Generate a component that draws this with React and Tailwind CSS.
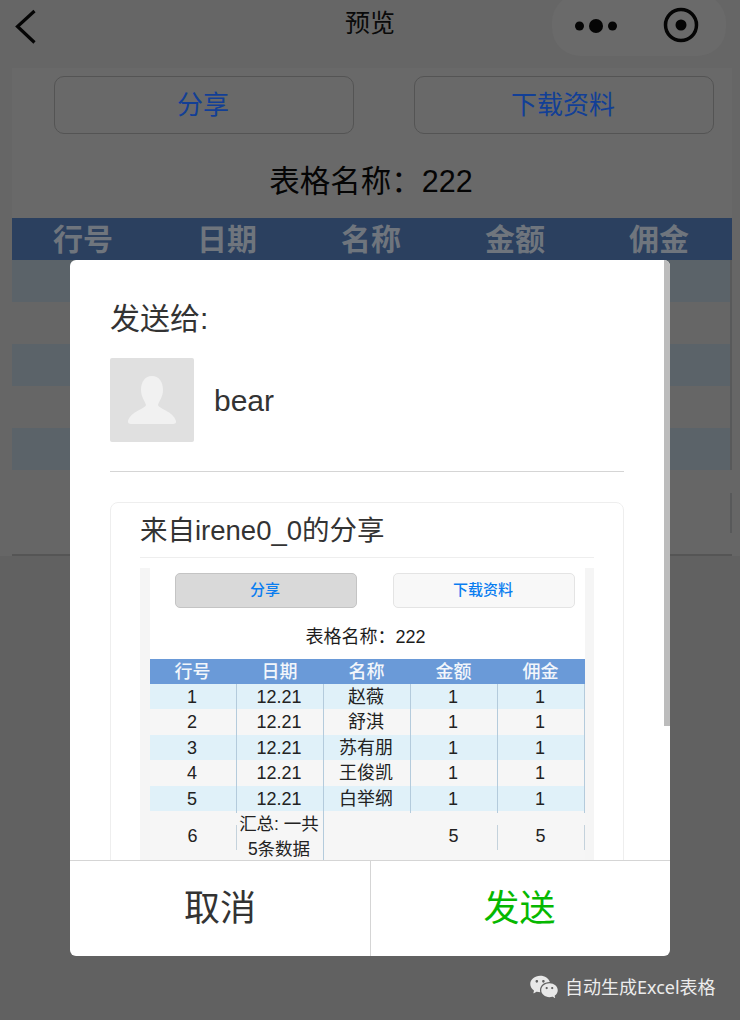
// App.jsx
// Share preview page with the "send to" dialog open
import React from 'react';
import { RiWechatFill } from 'react-icons/ri';

const COLUMNS = ['行号', '日期', '名称', '金额', '佣金'];

const ROWS = [
  ['1', '12.21', '赵薇', '1', '1'],
  ['2', '12.21', '舒淇', '1', '1'],
  ['3', '12.21', '苏有朋', '1', '1'],
  ['4', '12.21', '王俊凯', '1', '1'],
  ['5', '12.21', '白举纲', '1', '1'],
];

const PageBehind = () => (
  <div className="flex flex-col bg-[#666666] h-[556px]">
    {/* nav bar */}
    <div className="relative h-[68px] shrink-0 flex items-start justify-center">
      <svg className="absolute left-[14px] top-[8px]" width="24" height="38" viewBox="0 0 24 38" fill="none">
        <path d="M20.5 3 L3.5 18.5 L20.5 34.5" stroke="#050505" strokeWidth="3.2" />
      </svg>
      <span className="mt-[8px] text-[25px] leading-[30px] text-[#0a0a0a]">预览</span>
      <div className="absolute left-[552px] top-[-6px] w-[174px] h-[62px] rounded-[28px] bg-[#6a6a6a] flex items-center">
        <svg className="ml-[20px] mt-[2px]" width="50" height="16" viewBox="0 0 50 16">
          <circle cx="7.5" cy="8" r="4.5" fill="#050505" />
          <circle cx="24" cy="8" r="7" fill="#050505" />
          <circle cx="40.5" cy="8" r="4.5" fill="#050505" />
        </svg>
        <svg className="ml-[41px]" width="36" height="36" viewBox="0 0 36 36" fill="none">
          <circle cx="18" cy="18" r="15.5" stroke="#050505" strokeWidth="3.5" />
          <circle cx="18" cy="18" r="5.5" fill="#050505" />
        </svg>
      </div>
    </div>

    {/* page body */}
    <div className="ml-3 w-[720px] bg-[#696969] flex flex-col">
      <div className="flex pt-2 pl-[42px] gap-[60px]">
        <div className="w-[300px] h-[58px] rounded-[10px] border border-[#545454] flex items-center justify-center pr-[2px] text-[26px] text-[#123f96]">分享</div>
        <div className="w-[300px] h-[58px] rounded-[10px] border border-[#545454] flex items-center justify-center pr-[2px] text-[26px] text-[#123f96]">下载资料</div>
      </div>
      <div className="mt-[27px] h-[40px] text-center pr-[2px] text-[30.5px] leading-[40px] text-[#050505]">表格名称：222</div>
      <div className="mt-[17px] h-[42px] grid grid-cols-5 bg-[#2b405f] text-[30px] leading-[43px] text-center font-bold text-[#6f757d]">
        {COLUMNS.map(c => <div key={c} className="pr-[2px]">{c}</div>)}
      </div>
      <div className="h-[42px] bg-[#5b6369] border-r-2 border-[#58595a]" />
      <div className="h-[42px] bg-[#666666] border-r-2 border-[#58595a]" />
      <div className="h-[42px] bg-[#5b6369] border-r-2 border-[#58595a]" />
      <div className="h-[42px] bg-[#666666] border-r-2 border-[#58595a]" />
      <div className="h-[42px] bg-[#5b6369] border-r-2 border-[#58595a]" />
      <div className="h-[86px] bg-[#666666] border-b-2 border-[#555555] flex justify-end pt-[23px]">
        <div className="w-[2px] h-[40px] bg-[#58595a]" />
      </div>
    </div>
  </div>
);

// short divider in the total row, it does not reach the row's full height
const TotalCell = ({ children }) => (
  <div className="relative flex items-center justify-center pr-[2px]">
    {children}
    <div className="absolute right-0 top-[14px] h-[25px] w-px bg-[#c4d2dc]" />
  </div>
);

const SharedPreview = () => (
  <div className="mt-[10px] mx-[29px] pl-[10px] pr-[9px] bg-[#f5f5f5]">
    <div className="bg-white">
      <div className="flex pt-[5px] pl-[25px] gap-[36px]">
        <div className="w-[182px] h-[35px] rounded-[5px] border border-[#c4c4c4] bg-[#d9d9d9] flex items-center justify-center pr-[2px] text-[15px] font-medium text-[#0a7df0]">分享</div>
        <div className="w-[182px] h-[35px] rounded-[5px] border border-[#e4e4e4] bg-[#f8f8f8] flex items-center justify-center pr-[2px] text-[15px] font-medium text-[#0a7df0]">下载资料</div>
      </div>
      <div className="mt-[15px] h-[28px] text-center pr-[4px] text-[18px] leading-[28px] text-[#1c1c1c]">表格名称：222</div>
      <div className="mt-[8px] h-[25px] grid grid-cols-5 bg-[#6a9ad8] text-[18px] leading-[26px] text-center font-medium text-[#f2f6fb]">
        {COLUMNS.map(c => <div key={c} className="pr-[2px]">{c}</div>)}
      </div>
      {ROWS.map((row, i) => (
        <div key={row[0]} className={`h-[25.4px] grid grid-cols-5 text-[18px] leading-[27px] text-center text-[#222] ${i % 2 === 0 ? 'bg-[#e0f1f9]' : 'bg-[#f6f6f6]'}`}>
          {row.map((cell, j) => (
            <div key={j} className="border-r border-[#b4cbdc] pr-[2px]">{cell}</div>
          ))}
        </div>
      ))}
      <div className="h-[49px] grid grid-cols-5 bg-[#f6f6f6] text-[18px] text-center text-[#222] overflow-hidden">
        <TotalCell>6</TotalCell>
        <div className="leading-[25px] border-r border-[#b4cbdc] text-[17.5px] pt-[1px] pr-[2px] whitespace-nowrap">汇总: 一共<br />5条数据</div>
        <div />
        <TotalCell>5</TotalCell>
        <TotalCell>5</TotalCell>
      </div>
    </div>
  </div>
);

const SendDialog = () => (
  <div className="absolute left-[70px] top-[260px] w-[600px] h-[696px] bg-white rounded-[6px] overflow-hidden flex flex-col">
    <div className="h-[600px] relative overflow-hidden">
      <div className="absolute right-0 top-0 w-[6px] h-[466px] bg-[#bcbcbc]" />
      <div className="pl-[40px] pr-[46px]">
        <div className="pt-[39px] h-[98px] text-[30px] leading-[40px] text-[#333]">发送给:</div>
        <div className="flex items-center gap-[20px]">
          <div className="w-[84px] h-[84px] bg-[#e0e0e0] rounded-[2px] flex items-center justify-center">
            <svg width="50" height="50" viewBox="0 0 50 50">
              <path d="M25 1 C32 1 36 7 36 15 C36 22 32 26 31 30 C32 34 46 36 49 46 C49.500 48 48 49 46 49 L4 49 C2 49 0.500 48 1 46 C4 36 18 34 19 30 C18 26 14 22 14 15 C14 7 18 1 25 1 Z" fill="#f1f1f1" />
            </svg>
          </div>
          <span className="text-[30px] text-[#333]">bear</span>
        </div>
        <div className="mt-[29px] border-t border-[#d5d5d5]" />
        <div className="mt-[30px] border border-[#eeeeee] rounded-t-[8px] h-[400px]">
          <div className="mx-[29px] h-[55px] border-b border-[#eeeeee] text-[27.5px] leading-[55px] text-[#333]">来自irene0_0的分享</div>
          <SharedPreview />
        </div>
      </div>
    </div>
    <div className="flex-1 flex border-t border-[#d5d5d5] text-[36px]">
      <div className="w-[301px] border-r border-[#d5d5d5] flex items-center justify-center text-[#333]">取消</div>
      <div className="flex-1 flex items-center justify-center pr-[2px] text-[#06b800]">发送</div>
    </div>
  </div>
);

export default function App() {
  return (
    <div className="relative w-[740px] h-[1020px] overflow-hidden bg-[#616161] font-['Liberation_Sans','Noto_Sans_CJK_SC',sans-serif]">
      <PageBehind />
      <SendDialog />
      {/* article watermark */}
      <div className="absolute left-[529px] top-[972px] flex items-center gap-[6px] text-[#ececec] text-[18px] leading-[30px] font-['Noto_Sans','Noto_Sans_CJK_SC',sans-serif]">
        <RiWechatFill size={30} color="#e8e8e8" />
        <span>自动生成Excel表格</span>
      </div>
    </div>
  );
}
